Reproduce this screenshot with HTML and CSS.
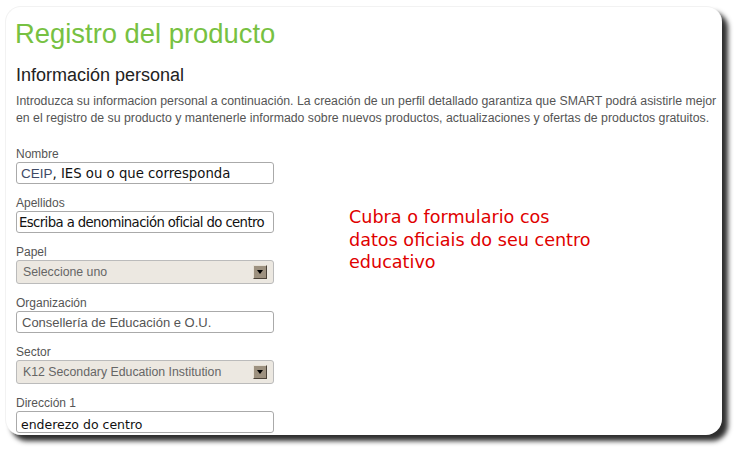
FILE: index.html
```html
<!DOCTYPE html>
<html>
<head>
<meta charset="utf-8">
<link rel="stylesheet" href="styles.css">
</head>
<body>
<div class="card">
  <h1 class="title">Registro del producto</h1>
  <h2 class="subtitle">Información personal</h2>
  <p class="intro">Introduzca su informacion personal a continuación. La creación de un perfil detallado garantiza que SMART podrá asistirle mejor en el registro de su producto y mantenerle informado sobre nuevos productos, actualizaciones y ofertas de productos gratuitos.</p>
  <div class="row">
    <div class="form">
      <div class="field">
        <div class="label">Nombre</div>
        <div class="input dv"><span class="ceip">CEIP</span>, IES ou o que corresponda</div>
      </div>
      <div class="field">
        <div class="label">Apellidos</div>
        <div class="input dv tight">Escriba a denominación oficial do centro</div>
      </div>
      <div class="field">
        <div class="label">Papel</div>
        <div class="select"><span>Seleccione uno</span><span class="arrow"><svg width="6" height="4" viewBox="0 0 6 4"><path d="M0 0H6L3 4Z" fill="#000"/></svg></span></div>
      </div>
      <div class="field">
        <div class="label">Organización</div>
        <div class="input ar">Consellería de Educación e O.U.</div>
      </div>
      <div class="field">
        <div class="label">Sector</div>
        <div class="select"><span>K12 Secondary Education Institution</span><span class="arrow"><svg width="6" height="4" viewBox="0 0 6 4"><path d="M0 0H6L3 4Z" fill="#000"/></svg></span></div>
      </div>
      <div class="field">
        <div class="label">Dirección 1</div>
        <div class="input dv low">enderezo do centro</div>
      </div>
    </div>
    <div class="note">Cubra o formulario cos datos oficiais do seu centro educativo</div>
  </div>
</div>
</body>
</html>
```
FILE: styles.css
```css
html, body {
  margin: 0;
  padding: 0;
  background: #fff;
}
body {
  width: 745px;
  height: 458px;
  overflow: hidden;
  font-family: "Liberation Sans", Arial, sans-serif;
}
.card {
  margin: 6px 0 0 5px;
  width: 717px;
  height: 429px;
  box-sizing: border-box;
  padding: 0 10px;
  background: #fff;
  border-radius: 16px;
  border-top: 1px solid #f2f2f2;
  border-left: 1px solid #f2f2f2;
  box-shadow: 6px 6px 5px rgba(0, 0, 0, 0.82);
  overflow: hidden;
}
.title {
  margin: 10px 0 0 -1px;
  font-weight: normal;
  font-size: 27.4px;
  line-height: 34px;
  color: #77c142;
}
.subtitle {
  margin: 13px 0 0 0;
  font-weight: normal;
  font-size: 18px;
  line-height: 22px;
  color: #222;
}
.intro {
  margin: 7px -8px 0 0;
  font-size: 12.3px;
  line-height: 17px;
  color: #555;
}
.row {
  display: flex;
  margin-top: 20px;
}
.form {
  width: 258px;
  display: flex;
  flex-direction: column;
  gap: 12px;
}
.label {
  font-size: 12px;
  line-height: 14px;
  color: #555;
  margin-bottom: 1px;
}
.input {
  height: 22px;
  box-sizing: border-box;
  border: 1px solid #aaa;
  border-radius: 3px;
  padding: 0 4px;
  display: flex;
  align-items: center;
  white-space: nowrap;
  overflow: hidden;
}
.dv {
  font-family: "DejaVu Sans", sans-serif;
  font-size: 13.25px;
  color: #111;
}
.tight {
  padding: 0 2px;
  letter-spacing: -0.6px;
}
.low {
  font-size: 12.5px;
  align-items: flex-end;
  padding-bottom: 0;
}
.ceip {
  font-family: "Liberation Sans", Arial, sans-serif;
  font-size: 13.5px;
  color: #3e4a66;
}
.ar {
  font-size: 13px;
  color: #555;
  padding: 0 5px;
}
.select {
  height: 24px;
  box-sizing: border-box;
  border: 1px solid #bbb;
  border-radius: 3px;
  background: #ece8e1;
  padding: 0 6px 0 6px;
  display: flex;
  align-items: center;
  justify-content: space-between;
  font-size: 12.3px;
  color: #666;
}
.arrow {
  width: 14px;
  height: 14px;
  box-sizing: border-box;
  background: #9d917f;
  border-top: 1px solid #e6e0d5;
  border-left: 1px solid #e6e0d5;
  border-right: 1px solid #4a4238;
  border-bottom: 1px solid #4a4238;
  display: flex;
  align-items: center;
  justify-content: center;
}
.note {
  margin: 59px 0 0 75px;
  width: 252px;
  font-family: "DejaVu Sans", sans-serif;
  font-size: 17.6px;
  line-height: 22.5px;
  color: #e00000;
}
```
